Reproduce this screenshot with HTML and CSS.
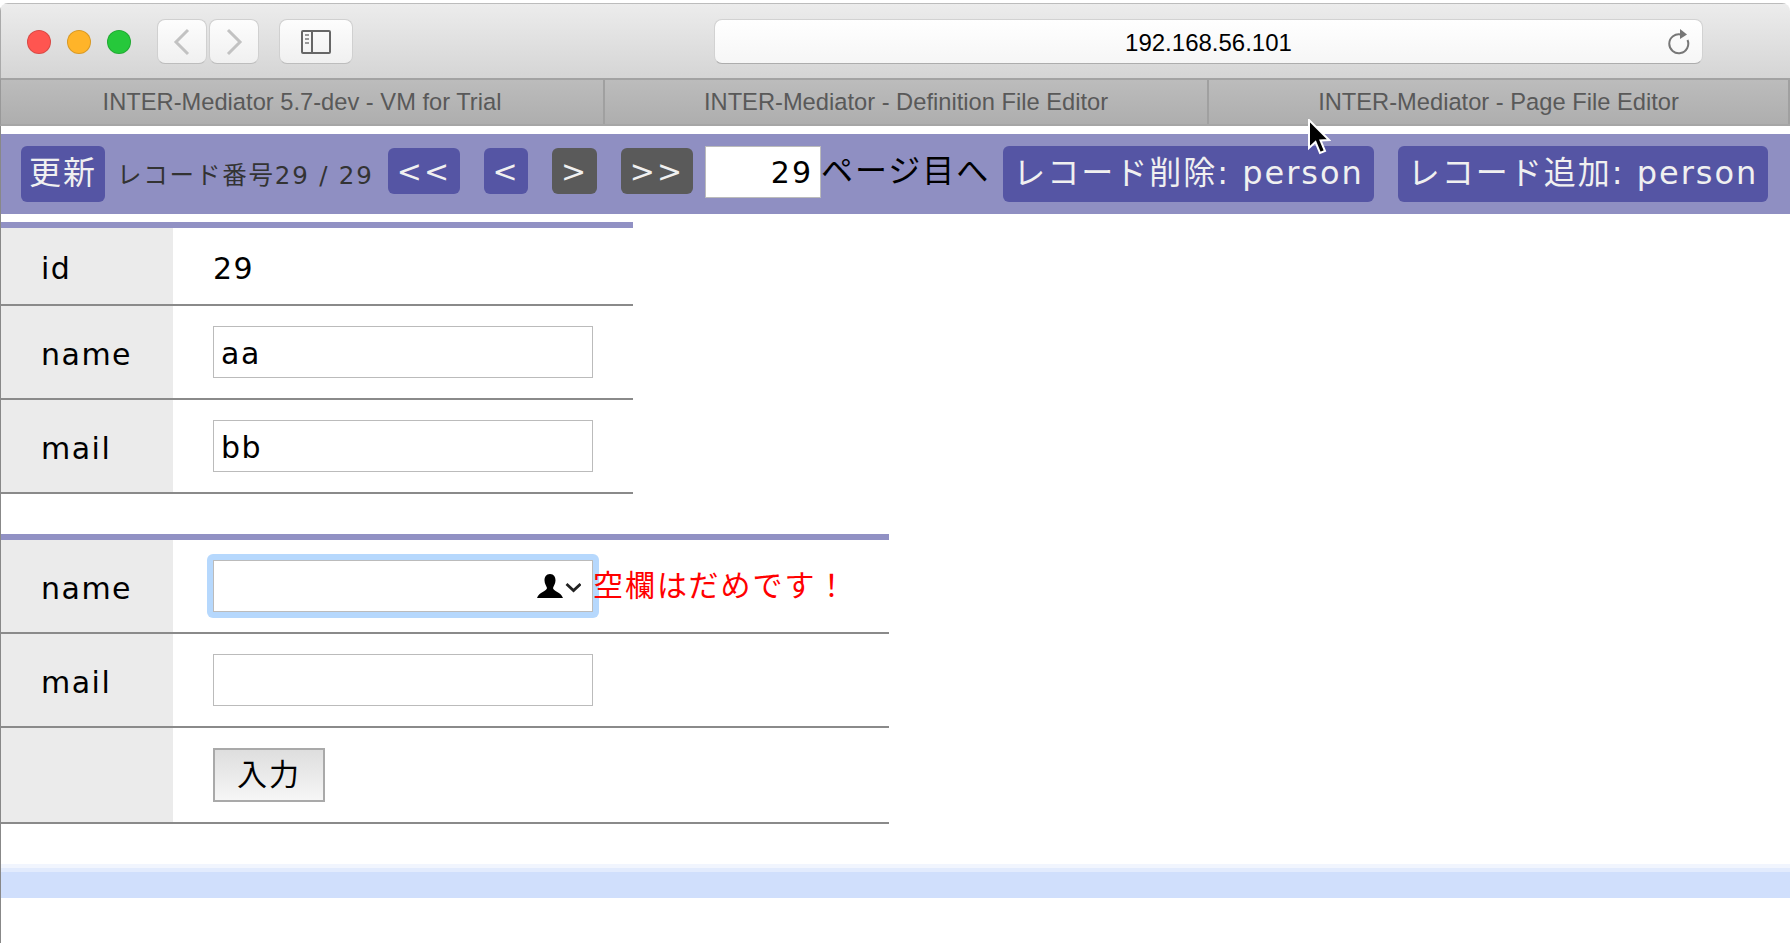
FILE: index.html
```html
<!DOCTYPE html>
<html lang="ja">
<head>
  <meta charset="UTF-8">
  <title>INTER-Mediator 5.7-dev - VM for Trial</title>
  <link rel="stylesheet" href="styles.css">
</head>
<body>
  <div class="window">
    <header class="toolbar">
      <div class="lights">
        <span class="light light-red"></span>
        <span class="light light-yellow"></span>
        <span class="light light-green"></span>
      </div>
      <div class="nav-group">
        <span class="tool-btn nav-btn">
          <svg width="20" height="28" viewBox="0 0 20 28"><path d="M16 2 L4 14 L16 26" fill="none" stroke="#c2c2c2" stroke-width="3"/></svg>
        </span>
        <span class="tool-btn nav-btn">
          <svg width="20" height="28" viewBox="0 0 20 28"><path d="M4 2 L16 14 L4 26" fill="none" stroke="#c2c2c2" stroke-width="3"/></svg>
        </span>
      </div>
      <span class="tool-btn sidebar-btn">
        <svg width="30" height="24" viewBox="0 0 30 24">
          <rect x="1" y="1" width="28" height="22" rx="1" fill="none" stroke="#666" stroke-width="2"/>
          <path d="M11 1 V23" stroke="#666" stroke-width="2"/>
          <path d="M4 5 H8 M4 9 H8 M4 13 H8" stroke="#999" stroke-width="2"/>
        </svg>
      </span>
      <div class="address">
        <span class="address-text">192.168.56.101</span>
        <svg class="reload" width="24" height="28" viewBox="0 0 24 28">
          <path d="M15 6.5 A9.5 9.5 0 1 0 21.5 12" fill="none" stroke="#777" stroke-width="2"/>
          <path d="M14 1 L21 6.5 L14 11 Z" fill="#777"/>
        </svg>
      </div>
    </header>

    <nav class="tabs">
      <div class="tab tab-wide">INTER-Mediator 5.7-dev - VM for Trial</div>
      <div class="tab tab-wide">INTER-Mediator - Definition File Editor</div>
      <div class="tab">INTER-Mediator - Page File Editor</div>
    </nav>

    <main class="page">
      <div class="navigator">
        <button class="nav-item big-btn refresh-btn">更新</button>
        <span class="record-count">レコード番号29 / 29</span>
        <button class="nav-item arrow-btn first-btn">&lt;&lt;</button>
        <button class="nav-item arrow-btn prev-btn">&lt;</button>
        <button class="nav-item arrow-btn arrow-off next-btn">&gt;</button>
        <button class="nav-item arrow-btn arrow-off last-btn">&gt;&gt;</button>
        <input class="page-input" type="text" value="29">
        <span class="page-label">ページ目へ</span>
        <button class="nav-item big-btn delete-btn">レコード削除: person</button>
        <button class="nav-item big-btn add-btn">レコード追加: person</button>
      </div>

      <table class="record record-detail">
        <tr>
          <th>id</th>
          <td class="value">29</td>
        </tr>
        <tr>
          <th>name</th>
          <td><input class="field" type="text" value="aa"></td>
        </tr>
        <tr>
          <th>mail</th>
          <td><input class="field" type="text" value="bb"></td>
        </tr>
      </table>

      <table class="record record-new">
        <tr>
          <th>name</th>
          <td>
            <div class="field-line">
              <div class="focus-ring">
                <input class="field" type="text">
                <span class="autofill">
                  <svg width="44" height="24" viewBox="0 0 44 24">
                    <path d="M13 0 C9 0 7.5 3 7.5 6.5 C7.5 10 9.5 12 10 14 C10 17 2 18 0 24 H26 C24 18 16 17 16 14 C16.500 12 18.500 10 18.500 6.500 C18.500 3 17 0 13 0 Z" fill="#000"/>
                    <path d="M29.500 10 L36.500 16.500 L43.500 10" fill="none" stroke="#222" stroke-width="2.800"/>
                  </svg>
                </span>
              </div>
              <span class="error-message">空欄はだめです！</span>
            </div>
          </td>
        </tr>
        <tr>
          <th>mail</th>
          <td><input class="field" type="text"></td>
        </tr>
        <tr>
          <th></th>
          <td><button class="submit-btn">入力</button></td>
        </tr>
      </table>

      <div class="footer-band"></div>
    </main>

    <svg class="cursor" width="24" height="38" viewBox="0 0 24 38">
      <path d="M2 1 V29 L8.500 23 L13 34 L18 32 L13.500 21.500 L22 21 Z" fill="#000" stroke="#fff" stroke-width="2"/>
    </svg>
  </div>
</body>
</html>
```

FILE: styles.css
```css
* {
  box-sizing: border-box;
}

html, body {
  height: 100%;
}

body {
  margin: 0;
  background: #fff;
  font-family: "DejaVu Sans", "Noto Sans CJK JP", sans-serif;
  overflow: hidden;
}

.window {
  position: relative;
  height: 940px;
  margin-top: 3px;
  border-radius: 8px 8px 0 0;
  overflow: hidden;
}

/* browser chrome */
.toolbar {
  display: flex;
  align-items: center;
  height: 75px;
  padding: 1px 87px 0 26px;
  background: linear-gradient(#ececec, #d5d5d5);
  border-top: 1px solid #bcbcbc;
  border-left: 1px solid #aaa;
}

.lights {
  display: flex;
  gap: 16px;
  margin-right: 26px;
}

.light {
  width: 24px;
  height: 24px;
  border-radius: 50%;
  border: 1px solid rgba(0, 0, 0, 0.15);
}

.light-red { background: #ff5550; }
.light-yellow { background: #ffb429; }
.light-green { background: #26c83b; }

.nav-group {
  display: flex;
  gap: 2px;
  margin-right: 20px;
}

.tool-btn {
  display: flex;
  align-items: center;
  justify-content: center;
  height: 45px;
  background: linear-gradient(#fdfdfd, #f0f0f0);
  border: 1px solid #d0d0d0;
  border-bottom-color: #bdbdbd;
  border-radius: 8px;
}

.nav-btn {
  width: 50px;
}

.sidebar-btn {
  width: 74px;
  margin-right: 361px;
}

.address {
  position: relative;
  flex: 1;
  height: 45px;
  display: flex;
  align-items: center;
  justify-content: center;
  background: linear-gradient(#fff, #f6f6f6);
  border: 1px solid #d2d2d2;
  border-bottom-color: #adadad;
  border-radius: 8px;
}

.address-text {
  padding-top: 2px;
  font-family: "Liberation Sans", sans-serif;
  font-size: 24px;
  color: #000;
}

.reload {
  position: absolute;
  right: 12px;
  top: 8px;
}

.tabs {
  display: flex;
  height: 48px;
  background: linear-gradient(#bcbcbc, #aeaeae);
  border-top: 2px solid #a3a3a3;
  border-bottom: 2px solid #a6a6a6;
  border-left: 1px solid #999;
}

.tab {
  flex: 1;
  display: flex;
  align-items: center;
  justify-content: center;
  border-right: 2px solid #a0a0a0;
  font-family: "Liberation Sans", sans-serif;
  font-size: 23.700px;
  color: #595959;
}

.tab-wide {
  flex: 0 0 604px;
}

/* page content */
.page {
  height: 817px;
  padding-top: 8px;
  border-left: 1px solid #888;
}

.navigator {
  display: flex;
  align-items: flex-start;
  height: 80px;
  padding: 12px 0 0 20px;
  background: #8f8fc2;
}

.nav-item {
  border: none;
  border-radius: 6px;
  background: #5555a4;
  color: #f0f0f0;
  font-family: inherit;
  font-size: 32px;
  letter-spacing: 2px;
  padding: 0;
}

.big-btn {
  height: 56px;
  padding-bottom: 9px;
}

.refresh-btn {
  width: 84px;
}

.record-count {
  margin: 0 16px 0 12px;
  width: 255px;
  line-height: 60px;
  font-size: 24.500px;
  letter-spacing: 1.800px;
  color: #333;
  white-space: nowrap;
}

.arrow-btn {
  height: 46px;
  margin-top: 2px;
  margin-right: 24px;
  padding-top: 2px;
  font-size: 30px;
  line-height: 40px;
}

.first-btn { width: 72px; }
.prev-btn { width: 44px; }
.next-btn { width: 45px; }
.last-btn { width: 72px; margin-right: 12px; }

.arrow-off {
  background: #5a5a5a;
}

.page-input {
  width: 116px;
  height: 52px;
  padding: 0 7px 0 8px;
  border: 1px solid #bbb;
  border-radius: 0;
  background: #fff;
  color: #000;
  font-family: inherit;
  font-size: 30px;
  letter-spacing: 2px;
  text-align: right;
}

.page-label {
  width: 182px;
  line-height: 50px;
  font-size: 32px;
  letter-spacing: 2px;
  color: #000;
  white-space: nowrap;
}

.delete-btn {
  width: 371px;
  margin-right: 24px;
}

.add-btn {
  width: 370px;
}

.record {
  border-collapse: collapse;
  border-top: 6px solid #9191c4;
  font-size: 30px;
  letter-spacing: 1.500px;
}

.record-detail {
  width: 632px;
  margin-top: 8px;
}

.record-new {
  width: 888px;
  margin-top: 40px;
}

.record tr {
  border-bottom: 2px solid #8a8a8a;
}

.record th,
.record td {
  padding: 20px 0;
  line-height: 36px;
  text-align: left;
  font-weight: normal;
  color: #000;
}

.record th {
  width: 172px;
  padding: 23px 0 17px 40px;
  background: #ebebeb;
}

.record td {
  padding-left: 40px;
}

.record .value {
  padding: 23px 0 17px 40px;
}

.field {
  display: block;
  width: 380px;
  height: 52px;
  padding: 2px 7px 0;
  border: 1px solid #bbb;
  border-radius: 0;
  background: #fff;
  color: #000;
  font-family: inherit;
  font-size: 30px;
  letter-spacing: 1.500px;
}

.field-line {
  display: flex;
  align-items: center;
}

.focus-ring {
  position: relative;
  margin: -6px 0;
  margin-left: -6px;
  padding: 6px;
  border-radius: 6px;
  background: #b6d8fd;
}

.autofill {
  position: absolute;
  top: 20px;
  right: 18px;
  display: flex;
}

.error-message {
  position: relative;
  margin-left: -6px;
  font-size: 30px;
  letter-spacing: 2px;
  color: #f00;
  white-space: nowrap;
}

.submit-btn {
  display: block;
  width: 112px;
  height: 54px;
  padding: 0 0 6px;
  border: 2px solid #a9a9a9;
  background: linear-gradient(#dedede, #f6f6f6);
  color: #000;
  font-family: inherit;
  font-size: 30px;
  letter-spacing: 2px;
}

.footer-band {
  height: 34px;
  margin-top: 40px;
  background: linear-gradient(#f1f5fe 0 4px, #e2ebfd 4px 8px, #d0dffc 8px);
}

.cursor {
  position: absolute;
  left: 1307px;
  top: 116px;
}
```
